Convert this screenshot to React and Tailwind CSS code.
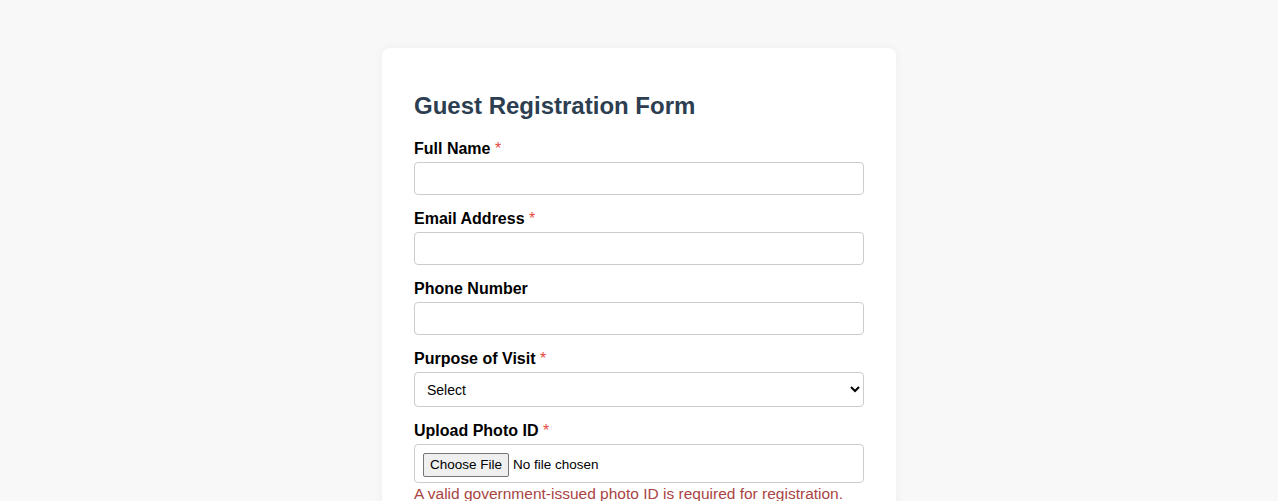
import React from 'react';

const font = { fontFamily: '"Liberation Sans", Arial, sans-serif' };

function Field({ label, required, children }) {
  return (
    <div className="mb-[14px]">
      <label className="block text-[16px] leading-[20px] font-bold text-black mb-[3px]">
        {label}
        {required && <span className="font-normal text-[#e74c3c]"> *</span>}
      </label>
      {children}
    </div>
  );
}

export default function App() {
  return (
    <div className="min-h-screen bg-[#f8f8f8] pt-12" style={font}>
      <div className="mx-auto w-[514px] bg-white rounded-lg shadow-[0_0_10px_rgba(0,0,0,0.05)] px-8 pt-8 pb-8">
        <h2 className="mt-3 mb-[19px] text-[24px] leading-[28px] font-bold text-[#2c3e50]">
          Guest Registration Form
        </h2>

        <Field label="Full Name" required>
          <input type="text" className="block w-full h-[33px] px-2 border border-[#ccc] rounded bg-white text-[16px]" />
        </Field>

        <Field label="Email Address" required>
          <input type="email" className="block w-full h-[33px] px-2 border border-[#ccc] rounded bg-white text-[16px]" />
        </Field>

        <Field label="Phone Number">
          <input type="tel" className="block w-full h-[33px] px-2 border border-[#ccc] rounded bg-white text-[16px]" />
        </Field>

        <Field label="Purpose of Visit" required>
          <select className="block w-full h-[35px] px-2 border border-[#ccc] rounded bg-white text-[14px] text-black">
            <option>Select</option>
            <option>Business Meeting</option>
            <option>Interview</option>
            <option>Delivery</option>
            <option>Personal Visit</option>
          </select>
        </Field>

        <div className="mb-[14px]">
          <label className="block text-[16px] leading-[20px] font-bold text-black mb-[3px]">
            Upload Photo ID<span className="font-normal text-[#e74c3c]"> *</span>
          </label>
          <input
            type="file"
            className="block w-full h-[39px] px-2 py-2 border border-[#ccc] rounded bg-white text-[13.5px] text-black file:mr-1 file:px-1.5 file:py-px file:border file:border-[#767676] file:rounded-[2px] file:bg-[#efefef] file:text-black"
          />
          <p className="mt-[2px] text-[15.5px] leading-[18px] text-[#a94442]">
            A valid government-issued photo ID is required for registration.
          </p>
        </div>
      </div>
    </div>
  );
}
